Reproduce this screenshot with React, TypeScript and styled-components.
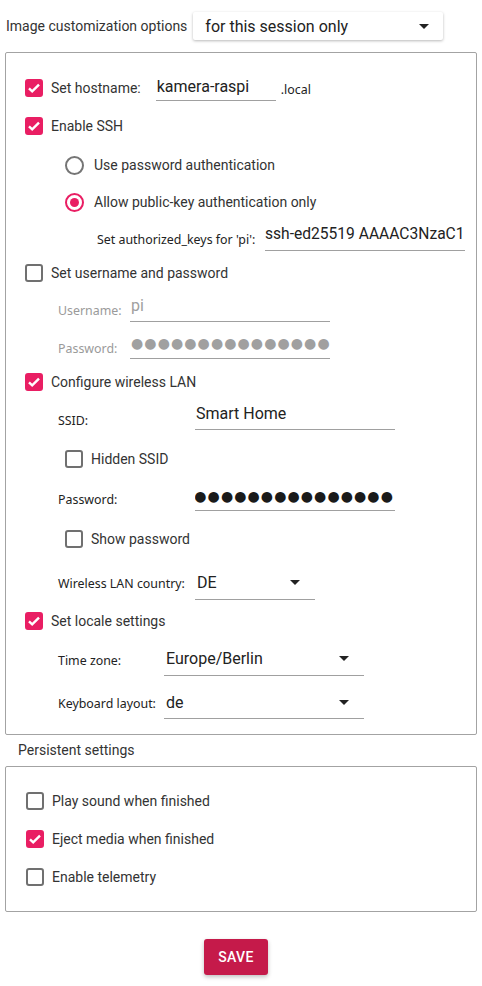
import React from "react";
import styled, { createGlobalStyle } from "styled-components";

const GlobalStyle = createGlobalStyle`
  html, body {
    margin: 0;
    padding: 0;
    background: #fff;
  }
  body {
    font-family: Roboto, "Liberation Sans", sans-serif;
    color: #333;
  }
`;

const PINK = "#e91e63";
const RASPBERRY = "#c51a4a";

const Page = styled.div`
  width: 482px;
  padding: 12px 5px 20px;
  box-sizing: border-box;
`;

const Header = styled.div`
  display: flex;
  align-items: center;
  height: 28px;
  margin-bottom: 12px;
`;

const HeaderLabel = styled.span`
  font-size: 14px;
  color: #333;
  padding-left: 1px;
`;

const TopCombo = styled.div`
  display: flex;
  align-items: center;
  justify-content: space-between;
  width: 250px;
  height: 28px;
  margin-left: 6px;
  padding: 0 14px 0 12px;
  box-sizing: border-box;
  background: #fff;
  border-radius: 2px;
  box-shadow: 0 1px 3px rgba(0, 0, 0, 0.28);
  font-size: 16px;
  color: #222;
`;

const Panel = styled.div<{ $pt: number; $pb: number }>`
  border: 1px solid #a3a3a3;
  border-radius: 2px;
  padding: ${(p) => p.$pt}px 0 ${(p) => p.$pb}px;
`;

const SectionTitle = styled.div`
  font-size: 14px;
  color: #333;
  line-height: 20px;
  margin: 5px 0 6px 13px;
`;

const Row = styled.div<{ $h: number; $indent: number }>`
  display: flex;
  align-items: center;
  height: ${(p) => p.$h}px;
  padding-left: ${(p) => p.$indent}px;
`;

const Label = styled.span`
  font-size: 14px;
  color: #333;
  white-space: nowrap;
`;

const SmallLabel = styled.span<{ $w?: number; $muted?: boolean }>`
  font-family: "Noto Sans", "Open Sans", sans-serif;
  font-size: 12.4px;
  color: ${(p) => (p.$muted ? "#9a9a9a" : "#222")};
  white-space: nowrap;
  ${(p) => (p.$w ? `width: ${p.$w}px; flex: none;` : "")}
`;

const Suffix = styled(SmallLabel)`
  margin-left: 5px;
  margin-top: 2px;
`;

const Field = styled.div<{ $w: number; $h: number; $lift: number; $ml?: number; $muted?: boolean }>`
  display: flex;
  align-items: center;
  width: ${(p) => p.$w}px;
  height: ${(p) => p.$h}px;
  margin-bottom: ${(p) => p.$lift}px;
  margin-left: ${(p) => p.$ml ?? 0}px;
  border-bottom: 1px solid #a0a0a0;
  box-sizing: border-box;
  padding: 0 1px;
  font-size: 16px;
  color: ${(p) => (p.$muted ? "#a0a0a0" : "#222")};
  white-space: nowrap;
  overflow: hidden;
`;

const KeyField = styled(Field)`
  padding: 0;
  font-size: 15.6px;
`;

const ComboField = styled(Field)`
  justify-content: space-between;
  padding: 0 15px 0 2px;
`;

const Dots = styled.span<{ $end?: boolean; $muted?: boolean }>`
  display: flex;
  justify-content: ${(p) => (p.$end ? "flex-end" : "flex-start")};
  width: 100%;
  font-family: "DejaVu Sans", sans-serif;
  font-size: 14px;
  letter-spacing: 1.1px;
  color: ${(p) => (p.$muted ? "#a0a0a0" : "#1a1a1a")};
`;

const Box = styled.span<{ $checked?: boolean }>`
  display: inline-flex;
  align-items: center;
  justify-content: center;
  flex: none;
  width: 18px;
  height: 18px;
  box-sizing: border-box;
  border-radius: 3px;
  border: 2px solid ${(p) => (p.$checked ? PINK : "#707070")};
  background: ${(p) => (p.$checked ? PINK : "#fff")};
  margin-right: 8px;
`;

const RadioRing = styled.span<{ $checked?: boolean }>`
  display: inline-flex;
  align-items: center;
  justify-content: center;
  flex: none;
  width: 19px;
  height: 19px;
  box-sizing: border-box;
  border-radius: 50%;
  border: 2px solid ${(p) => (p.$checked ? PINK : "#757575")};
  margin-right: 10px;
`;

const RadioDot = styled.span`
  width: 9px;
  height: 9px;
  border-radius: 50%;
  background: ${PINK};
`;

const Footer = styled.div`
  display: flex;
  justify-content: center;
  margin-top: 27px;
`;

const SaveButton = styled.button`
  width: 64px;
  height: 36px;
  margin-left: -10px;
  border: none;
  border-radius: 3px;
  background: ${RASPBERRY};
  color: #fff;
  font-family: Roboto, "Liberation Sans", sans-serif;
  font-size: 14px;
  font-weight: 500;
  letter-spacing: 0.3px;
  box-shadow: 0 2px 4px rgba(0, 0, 0, 0.25);
  cursor: pointer;
`;

function Check({ checked, label }: { checked?: boolean; label: string }) {
  return (
    <>
      <Box $checked={checked}>
        {checked && (
          <svg width="14" height="14" viewBox="0 0 14 14">
            <path d="M2 7.3l3.2 3.1L12 3.6" fill="none" stroke="#fff" strokeWidth="2.4" />
          </svg>
        )}
      </Box>
      <Label>{label}</Label>
    </>
  );
}

function Radio({ checked, label }: { checked?: boolean; label: string }) {
  return (
    <>
      <RadioRing $checked={checked}>{checked && <RadioDot />}</RadioRing>
      <Label>{label}</Label>
    </>
  );
}

function Caret() {
  return (
    <svg width="10" height="5" viewBox="0 0 10 5">
      <path d="M0 0h10L5 5z" fill="#222" />
    </svg>
  );
}

const dots = "●".repeat(15);

export default function App() {
  return (
    <>
      <GlobalStyle />
      <Page>
        <Header>
          <HeaderLabel>Image customization options</HeaderLabel>
          <TopCombo>
            <span>for this session only</span>
            <Caret />
          </TopCombo>
        </Header>

        <Panel $pt={16} $pb={13}>
          <Row $h={38} $indent={19}>
            <Check checked label="Set hostname:" />
            <Field $w={120} $h={28} $lift={3} $ml={15}>kamera-raspi</Field>
            <Suffix>.local</Suffix>
          </Row>
          <Row $h={38} $indent={19}>
            <Check checked label="Enable SSH" />
          </Row>
          <Row $h={40} $indent={59}>
            <Radio label="Use password authentication" />
          </Row>
          <Row $h={34} $indent={59}>
            <Radio checked label="Allow public-key authentication only" />
          </Row>
          <Row $h={40} $indent={91}>
            <SmallLabel $w={168}>Set authorized_keys for 'pi':</SmallLabel>
            <KeyField $w={200} $h={34} $lift={10}>ssh-ed25519 AAAAC3NzaC1</KeyField>
          </Row>
          <Row $h={28} $indent={19}>
            <Check label="Set username and password" />
          </Row>
          <Row $h={46} $indent={52}>
            <SmallLabel $w={72} $muted>Username:</SmallLabel>
            <Field $w={200} $h={32} $lift={8} $muted>pi</Field>
          </Row>
          <Row $h={30} $indent={52}>
            <SmallLabel $w={72} $muted>Password:</SmallLabel>
            <Field $w={200} $h={32} $lift={10} $muted>
              <Dots $muted>{dots}</Dots>
            </Field>
          </Row>
          <Row $h={38} $indent={19}>
            <Check checked label="Configure wireless LAN" />
          </Row>
          <Row $h={38} $indent={52}>
            <SmallLabel $w={137}>SSID:</SmallLabel>
            <Field $w={200} $h={32} $lift={12}>Smart Home</Field>
          </Row>
          <Row $h={40} $indent={59}>
            <Check label="Hidden SSID" />
          </Row>
          <Row $h={40} $indent={52}>
            <SmallLabel $w={137}>Password:</SmallLabel>
            <Field $w={200} $h={30} $lift={6}>
              <Dots $end>{dots}</Dots>
            </Field>
          </Row>
          <Row $h={40} $indent={59}>
            <Check label="Show password" />
          </Row>
          <Row $h={48} $indent={52}>
            <SmallLabel $w={137}>Wireless LAN country:</SmallLabel>
            <ComboField $w={120} $h={34} $lift={0}>
              <span>DE</span>
              <Caret />
            </ComboField>
          </Row>
          <Row $h={28} $indent={19}>
            <Check checked label="Set locale settings" />
          </Row>
          <Row $h={50} $indent={52}>
            <SmallLabel $w={106}>Time zone:</SmallLabel>
            <ComboField $w={200} $h={34} $lift={2}>
              <span>Europe/Berlin</span>
              <Caret />
            </ComboField>
          </Row>
          <Row $h={36} $indent={52}>
            <SmallLabel $w={106}>Keyboard layout:</SmallLabel>
            <ComboField $w={200} $h={32} $lift={0}>
              <span>de</span>
              <Caret />
            </ComboField>
          </Row>
        </Panel>

        <SectionTitle>Persistent settings</SectionTitle>

        <Panel $pt={15} $pb={15}>
          <Row $h={38} $indent={20}>
            <Check label="Play sound when finished" />
          </Row>
          <Row $h={38} $indent={20}>
            <Check checked label="Eject media when finished" />
          </Row>
          <Row $h={38} $indent={20}>
            <Check label="Enable telemetry" />
          </Row>
        </Panel>

        <Footer>
          <SaveButton>SAVE</SaveButton>
        </Footer>
      </Page>
    </>
  );
}
